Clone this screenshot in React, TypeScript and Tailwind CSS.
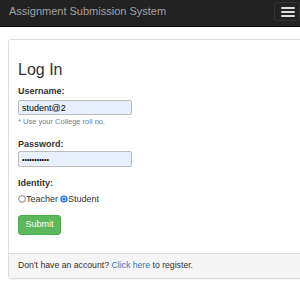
import { useState } from 'react'

const font = { fontFamily: '"Liberation Sans", Arial, sans-serif' }

function Radio({ checked }: { checked: boolean }) {
  return (
    <svg width="8" height="8" viewBox="0 0 8 8" className="shrink-0">
      {checked ? (
        <>
          <circle cx="4" cy="4" r="3.6" fill="#1a73e8" />
          <circle cx="4" cy="4" r="2.2" fill="#fff" />
          <circle cx="4" cy="4" r="1.6" fill="#1a73e8" />
        </>
      ) : (
        <circle cx="4" cy="4" r="3.4" fill="#fff" stroke="#6b6b6b" strokeWidth="0.8" />
      )}
    </svg>
  )
}

export default function App() {
  const [identity, setIdentity] = useState('student')

  return (
    <div className="w-[300px] h-[300px] overflow-hidden bg-white text-[#333]" style={font}>
      <nav className="h-[27px] bg-[#222] flex items-start justify-between border-b border-[#080808]">
        <div className="pl-[9px] pt-[4px] text-[11px] leading-[14px] text-[#a3a3a3]">
          Assignment Submission System
        </div>
        <button className="mt-[2px] w-[26px] h-[19px] border border-[#333] rounded-[3px] flex flex-col items-center justify-center gap-[2px] pl-[1px]">
          <span className="block w-[14px] h-[2px] bg-[#ddd] rounded-[1px]" />
          <span className="block w-[14px] h-[2px] bg-[#ddd] rounded-[1px]" />
          <span className="block w-[14px] h-[2px] bg-[#ddd] rounded-[1px]" />
        </button>
      </nav>

      <div className="pl-[8px] mt-[12px]">
        <div className="w-[320px] border border-[#ddd] rounded-[3px] shadow-[0_1px_1px_rgba(0,0,0,0.05)]">
          <div className="pl-[9px] pt-[21px] pb-[18px]">
            <h3 className="text-[16px] leading-[18px] text-[#333]">Log In</h3>

            <label className="block mt-[6px] text-[9px] leading-[12px] font-bold">Username:</label>
            <input
              className="block mt-[3px] w-[114px] h-[15px] px-[3px] border border-[#bbb] rounded-[2px] bg-[#e8f0fe] text-[9px] text-black outline-none"
              defaultValue="student@2"
            />
            <p className="mt-[2px] text-[7.5px] leading-[10px] text-[#6c7d90]">* Use your College roll no.</p>

            <label className="block mt-[11px] text-[9px] leading-[12px] font-bold">Password:</label>
            <input
              type="password"
              className="block mt-[1px] w-[114px] h-[16px] px-[3px] border border-[#bbb] rounded-[2px] bg-[#e8f0fe] text-[7px] text-black outline-none"
              defaultValue="1234567890a"
            />

            <label className="block mt-[10px] text-[9px] leading-[12px] font-bold">Identity:</label>
            <div className="mt-[4px] flex items-center text-[9px] leading-[12px]">
              <span className="flex items-center cursor-pointer" onClick={() => setIdentity('teacher')}>
                <Radio checked={identity === 'teacher'} />
                <span>Teacher</span>
              </span>
              <span className="flex items-center ml-[2px] cursor-pointer" onClick={() => setIdentity('student')}>
                <Radio checked={identity === 'student'} />
                <span>Student</span>
              </span>
            </div>

            <button className="mt-[10px] w-[43px] h-[20px] bg-[#5cb85c] border border-[#4cae4c] rounded-[3px] text-white text-[9px]">
              Submit
            </button>
          </div>

          <div className="h-[25px] bg-[#f5f5f5] border-t border-[#ddd] pl-[9px] flex items-center text-[8.7px]">
            <span>
              Don't have an account? <a className="text-[#337ab7]">Click here</a> to register.
            </span>
          </div>
        </div>
      </div>
    </div>
  )
}
